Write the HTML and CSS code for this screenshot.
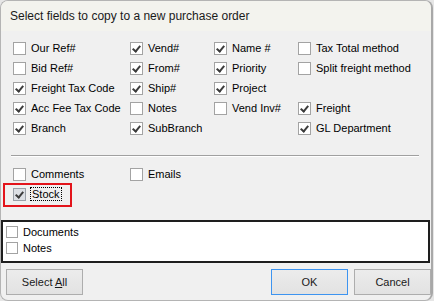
FILE: index.html
```html
<!DOCTYPE html>
<html lang="en">
  <head>
    <meta charset="UTF-8">
    <title>Select fields</title>
    <link rel="stylesheet" href="styles.css">
  </head>
  <body>
    <div class="dialog">
      <div class="titlebar">Select fields to copy to a new purchase order</div>

      <div class="fields">
        <label class="check"><span class="box"></span>Our Ref#</label>
        <label class="check"><span class="box on"></span>Vend#</label>
        <label class="check"><span class="box on"></span>Name #</label>
        <label class="check"><span class="box"></span>Tax Total method</label>

        <label class="check"><span class="box"></span>Bid Ref#</label>
        <label class="check"><span class="box on"></span>From#</label>
        <label class="check"><span class="box on"></span>Priority</label>
        <label class="check"><span class="box"></span>Split freight method</label>

        <label class="check"><span class="box on"></span>Freight Tax Code</label>
        <label class="check"><span class="box on"></span>Ship#</label>
        <label class="check"><span class="box on"></span>Project</label>
        <span></span>

        <label class="check"><span class="box on"></span>Acc Fee Tax Code</label>
        <label class="check"><span class="box"></span>Notes</label>
        <label class="check"><span class="box"></span>Vend Inv#</label>
        <label class="check"><span class="box on"></span>Freight</label>

        <label class="check"><span class="box on"></span>Branch</label>
        <label class="check"><span class="box on"></span>SubBranch</label>
        <span></span>
        <label class="check"><span class="box on"></span>GL Department</label>
      </div>

      <div class="separator"></div>

      <div class="fields extra">
        <label class="check"><span class="box"></span>Comments</label>
        <label class="check"><span class="box"></span>Emails</label>
        <label class="check stock"><span class="box on grey"></span><span class="focus">Stock</span></label>
      </div>

      <div class="listbox">
        <label class="check small"><span class="box"></span>Documents</label>
        <label class="check small"><span class="box"></span>Notes</label>
      </div>

      <div class="buttons">
        <button class="button">Select <u>A</u>ll</button>
        <div class="spacer"></div>
        <button class="button default">OK</button>
        <button class="button">Cancel</button>
      </div>
    </div>
  </body>
</html>
```

FILE: styles.css
```css
body {
  margin: 0;
  background: #e6e6e6;
  font-family: 'Liberation Sans', Arial, sans-serif;
  font-size: 11px;
  color: #000;
}
.dialog {
  width: 433px;
  height: 301px;
  box-sizing: border-box;
  background: #f0f0f0;
  border: 1px solid #b4b4b4;
  border-right: 2px solid #a8a8a8;
  border-radius: 8px;
  overflow: hidden;
}
.titlebar {
  height: 30px;
  line-height: 30px;
  padding-left: 9px;
  background: #f3f3ee;
  font-size: 12px;
  color: #1a1a1a;
}
.fields {
  display: grid;
  grid-template-columns: 117px 84px 84px 1fr;
  grid-auto-rows: 20px;
  padding: 7px 0 0 12px;
}
.fields.extra {
  grid-template-columns: 117px 1fr;
  padding-top: 7px;
}
.check {
  display: flex;
  align-items: center;
  gap: 5px;
  white-space: nowrap;
}
.box {
  width: 13px;
  height: 13px;
  box-sizing: border-box;
  border: 1px solid #a3a3a3;
  background: #fff;
  flex-shrink: 0;
  position: relative;
}
.box.on::after {
  content: '';
  position: absolute;
  left: 3px;
  top: 1px;
  width: 3px;
  height: 6px;
  border: solid #3c3c3c;
  border-width: 0 2px 2px 0;
  transform: rotate(40deg);
}
.box.grey {
  background: #dcdfe4;
  border-color: #9aa0a8;
}
.separator {
  margin: 17px 12px 0 10px;
  border-top: 1px solid #a0a0a0;
  border-bottom: 1px solid #fff;
}
.stock {
  position: relative;
}
.stock::after {
  content: '';
  position: absolute;
  left: -10px;
  top: -1px;
  width: 65px;
  height: 20px;
  border: 2px solid #e3141b;
}
.focus {
  outline: 1px dotted #000;
  padding: 0 1px;
}
.listbox {
  margin: 16px 1px 0 0;
  height: 43px;
  box-sizing: border-box;
  background: #fff;
  border: 2px solid #1e1e1e;
  padding: 2px 0 0 3px;
}
.check.small {
  height: 16px;
}
.check.small .box {
  width: 12px;
  height: 12px;
}
.buttons {
  display: flex;
  gap: 6px;
  padding: 6px 0 0 5px;
}
.spacer {
  flex: 1;
}
.button {
  width: 77px;
  height: 26px;
  background: linear-gradient(#ececec, #e2e2e2);
  border: 1px solid #adadad;
  font-family: inherit;
  font-size: 11px;
  color: #1a1a1a;
  padding: 0;
}
.button.default {
  border-color: #3d94f0;
}
```
